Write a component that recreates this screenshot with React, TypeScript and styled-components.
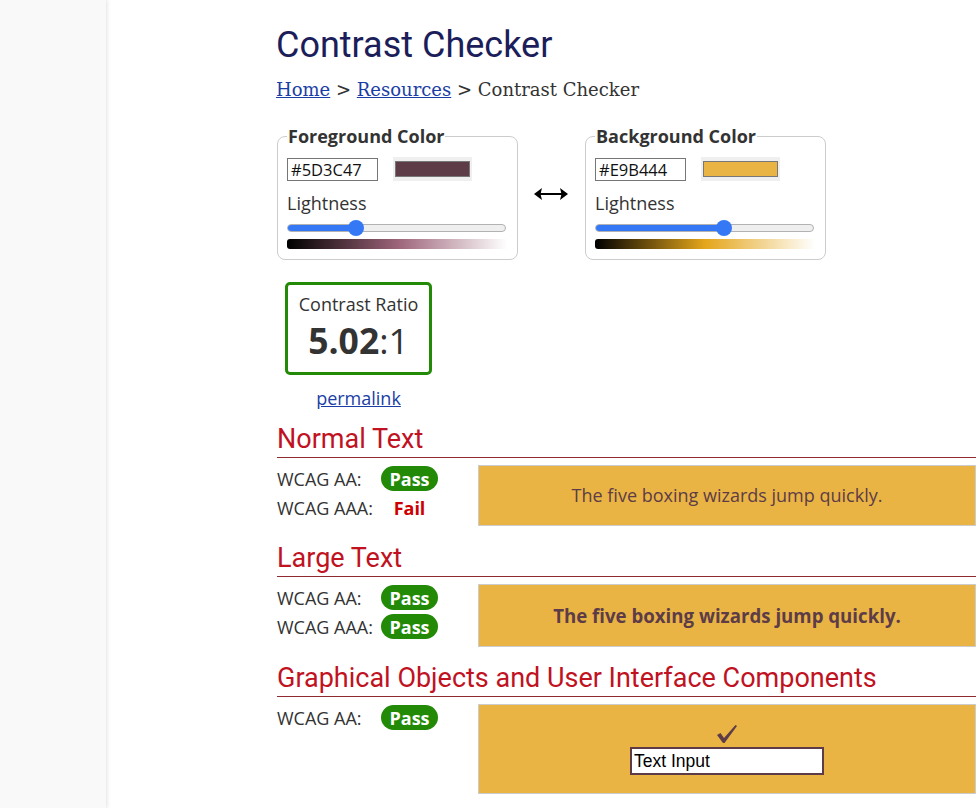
import React from "react";
import styled, { createGlobalStyle } from "styled-components";

const FG = "#5D3C47";
const BG = "#E9B444";

const GlobalStyle = createGlobalStyle`
  html, body {
    margin: 0;
    padding: 0;
    background: #fff;
    overflow: hidden;
  }
  body {
    font-family: "Open Sans", "DejaVu Sans", sans-serif;
    color: #333;
  }
`;

const Page = styled.div`
  display: flex;
  min-height: 808px;
`;

const Sidebar = styled.aside`
  width: 106px;
  flex: 0 0 106px;
  background: #f9f9f9;
  box-shadow: 1px 0 4px rgba(0, 0, 0, 0.12);
`;

const Main = styled.main`
  flex: 1;
  padding-left: 170px;
`;

const Content = styled.div`
  width: 700px;
`;

const Title = styled.h1`
  margin: 25px 0 0;
  font-family: Roboto, "Liberation Sans", sans-serif;
  font-weight: 400;
  font-size: 36px;
  line-height: 40px;
  color: #1b1e5a;
`;

const Breadcrumb = styled.nav`
  margin-top: 12px;
  font-family: "DejaVu Serif", "Liberation Serif", serif;
  font-size: 18px;
  line-height: 26px;
  color: #333;
`;

const Crumb = styled.a`
  color: #1a3ea5;
  text-decoration: underline;
`;

const Pickers = styled.div`
  display: flex;
  align-items: center;
  margin-top: 22px;
  margin-left: 1px;
`;

const Picker = styled.fieldset`
  margin: 0;
  width: 240px;
  box-sizing: border-box;
  border: 1px solid #ccc;
  border-radius: 8px;
  padding: 0 10px 10px 9px;
`;

const Legend = styled.legend`
  padding: 0 1px;
  font-weight: 700;
  font-size: 18px;
  line-height: 23px;
  color: #333;
`;

const HexRow = styled.div`
  display: flex;
  align-items: center;
  gap: 15px;
  margin-top: 9px;
`;

const HexInput = styled.input`
  width: 91px;
  height: 23px;
  box-sizing: border-box;
  border: 1px solid #767676;
  padding: 0 3px;
  font-family: "Open Sans", sans-serif;
  font-size: 16.5px;
  color: #111;
  background: #fff;
  outline: none;
`;

const Swatch = styled.div<{ $color: string }>`
  width: 79px;
  height: 24px;
  box-sizing: border-box;
  background: #efefef;
  padding: 4px 2px;
  display: flex;

  &::after {
    content: "";
    flex: 1;
    background: ${({ $color }) => $color};
    border: 1px solid #777;
  }
`;

const FieldLabel = styled.div`
  margin-top: 10px;
  font-size: 18px;
  line-height: 24px;
  color: #333;
`;

const Slider = styled.div`
  position: relative;
  height: 16px;
  margin-top: 5px;
  width: 219px;
  display: flex;
  align-items: center;
`;

const Track = styled.div`
  position: relative;
  width: 100%;
  height: 8px;
  box-sizing: border-box;
  border: 1px solid #b2b2b2;
  border-radius: 4px;
  background: #efefef;
  overflow: hidden;
`;

const Fill = styled.div`
  position: absolute;
  left: 0;
  top: -1px;
  bottom: -1px;
  background: #3478f6;
`;

const Thumb = styled.div`
  position: absolute;
  top: 0;
  width: 16px;
  height: 16px;
  margin-left: -8px;
  border-radius: 50%;
  background: #3478f6;
`;

const Gradient = styled.div<{ $mid: string }>`
  margin-top: 3px;
  width: 220px;
  height: 10px;
  border-radius: 3px 0 0 3px;
  background: linear-gradient(to right, #000, ${({ $mid }) => $mid}, #fff);
`;

const SwapArrow = styled.div`
  width: 68px;
  display: flex;
  justify-content: center;
  margin-top: 2px;
  margin-left: -1px;
`;

const RatioColumn = styled.div`
  display: inline-flex;
  flex-direction: column;
  align-items: center;
  margin-top: 22px;
  margin-left: 9px;
`;

const RatioBox = styled.div`
  width: 147px;
  box-sizing: border-box;
  border: 3px solid #228a07;
  border-radius: 5px;
  padding: 7px 0 8px;
  text-align: center;
`;

const RatioCaption = styled.div`
  font-size: 18px;
  line-height: 24px;
  color: #333;
`;

const RatioValue = styled.div`
  font-size: 35.5px;
  line-height: 48px;
  color: #333;

  b {
    font-weight: 700;
  }
`;

const Permalink = styled.a`
  margin-top: 11px;
  font-size: 18px;
  line-height: 24px;
  color: #1a3ea5;
  text-decoration: underline;
`;

const Section = styled.section<{ $gap: number }>`
  margin-top: ${({ $gap }) => $gap}px;
`;

const SectionTitle = styled.h2`
  margin: 0 0 0 1px;
  padding-bottom: 3px;
  border-bottom: 1px solid #8f2a30;
  font-family: Roboto, "Liberation Sans", sans-serif;
  font-weight: 400;
  font-size: 27px;
  line-height: 30px;
  color: #c0121f;
`;

const SectionBody = styled.div`
  display: grid;
  grid-template-columns: 202px 1fr;
  margin-top: 7px;
`;

const Results = styled.div`
  display: flex;
  flex-direction: column;
  margin-top: -1px;
`;

const ResultRow = styled.div`
  display: flex;
  align-items: center;
  height: 29px;
`;

const ResultLabel = styled.span`
  width: 105px;
  padding-left: 1px;
  box-sizing: border-box;
  font-size: 18px;
  color: #333;
`;

const Status = styled.span`
  width: 57px;
  display: flex;
  justify-content: center;
`;

const Badge = styled.span`
  display: inline-flex;
  align-items: center;
  justify-content: center;
  width: 57px;
  height: 25px;
  border-radius: 13px;
  background: #228a07;
  color: #fff;
  font-weight: 700;
  font-size: 18px;
`;

const Fail = styled.span`
  color: #cc0000;
  font-weight: 700;
  font-size: 18px;
`;

const Sample = styled.div<{ $large?: boolean }>`
  border: 1px solid #ccc;
  background: ${BG};
  color: ${FG};
  padding: 17px 10px;
  text-align: center;
  font-size: ${({ $large }) => ($large ? "18.67px" : "18px")};
  font-weight: ${({ $large }) => ($large ? 700 : 400)};
  line-height: ${({ $large }) => ($large ? "27px" : "25px")};
`;

const GraphicSample = styled.div`
  border: 1px solid #ccc;
  background: ${BG};
  padding: 16px 10px 18px;
  display: flex;
  flex-direction: column;
  align-items: center;
`;

const Check = styled.div`
  height: 26px;
  display: flex;
  align-items: center;
`;

const DemoInput = styled.input`
  width: 194px;
  height: 28px;
  box-sizing: border-box;
  border: 2px solid ${FG};
  padding: 0 2px;
  font-family: "Liberation Sans", Arial, sans-serif;
  font-size: 17.5px;
  color: #000;
  background: #fff;
  outline: none;
`;

const ArrowIcon = () => (
  <svg width="36" height="14" viewBox="0 0 36 14">
    <path d="M3 7 H33" stroke="#000" strokeWidth="2" />
    <path d="M1 7 L9 1 L7.5 7 L9 13 Z" fill="#000" />
    <path d="M35 7 L27 1 L28.5 7 L27 13 Z" fill="#000" />
  </svg>
);

const CheckIcon = () => (
  <svg width="22" height="20" viewBox="0 0 22 20">
    <path d="M1 11 L4.5 9 L8 14 L19.5 1 L21 2 L8.5 19 L7 19 Z" fill={FG} />
  </svg>
);

type PickerProps = {
  title: string;
  hex: string;
  mid: string;
  value: number;
};

const ColorPicker: React.FC<PickerProps> = ({ title, hex, mid, value }) => (
  <Picker>
    <Legend>{title}</Legend>
    <HexRow>
      <HexInput defaultValue={hex} />
      <Swatch $color={hex} />
    </HexRow>
    <FieldLabel>Lightness</FieldLabel>
    <Slider>
      <Track>
        <Fill style={{ width: `${value * 100}%` }} />
      </Track>
      <Thumb style={{ left: `${value * 100}%` }} />
    </Slider>
    <Gradient $mid={mid} />
  </Picker>
);

const Row: React.FC<{ label: string; pass: boolean }> = ({ label, pass }) => (
  <ResultRow>
    <ResultLabel>{label}</ResultLabel>
    <Status>{pass ? <Badge>Pass</Badge> : <Fail>Fail</Fail>}</Status>
  </ResultRow>
);

const App: React.FC = () => {
  return (
    <>
      <GlobalStyle />
      <Page>
        <Sidebar />
        <Main>
          <Content>
            <Title>Contrast Checker</Title>
            <Breadcrumb>
              <Crumb href="#">Home</Crumb> &gt; <Crumb href="#">Resources</Crumb> &gt; Contrast Checker
            </Breadcrumb>

            <Pickers>
              <ColorPicker title="Foreground Color" hex="#5D3C47" mid="#9c6378" value={0.315} />
              <SwapArrow>
                <ArrowIcon />
              </SwapArrow>
              <ColorPicker title="Background Color" hex="#E9B444" mid="#e4a61b" value={0.59} />
            </Pickers>

            <RatioColumn>
              <RatioBox>
                <RatioCaption>Contrast Ratio</RatioCaption>
                <RatioValue>
                  <b>5.02</b>:1
                </RatioValue>
              </RatioBox>
              <Permalink href="#">permalink</Permalink>
            </RatioColumn>

            <Section $gap={14}>
              <SectionTitle>Normal Text</SectionTitle>
              <SectionBody>
                <Results>
                  <Row label="WCAG AA:" pass />
                  <Row label="WCAG AAA:" pass={false} />
                </Results>
                <Sample>The five boxing wizards jump quickly.</Sample>
              </SectionBody>
            </Section>

            <Section $gap={17}>
              <SectionTitle>Large Text</SectionTitle>
              <SectionBody>
                <Results>
                  <Row label="WCAG AA:" pass />
                  <Row label="WCAG AAA:" pass />
                </Results>
                <Sample $large>The five boxing wizards jump quickly.</Sample>
              </SectionBody>
            </Section>

            <Section $gap={16}>
              <SectionTitle>Graphical Objects and User Interface Components</SectionTitle>
              <SectionBody>
                <Results>
                  <Row label="WCAG AA:" pass />
                </Results>
                <GraphicSample>
                  <Check>
                    <CheckIcon />
                  </Check>
                  <DemoInput defaultValue="Text Input" />
                </GraphicSample>
              </SectionBody>
            </Section>
          </Content>
        </Main>
      </Page>
    </>
  );
};

export default App;
